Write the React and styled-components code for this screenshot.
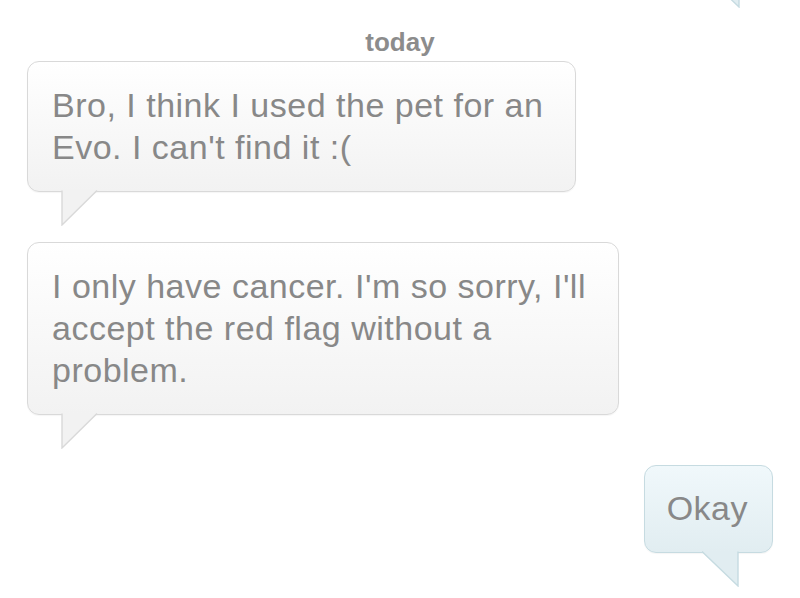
import React from "react";
import styled, { createGlobalStyle, css } from "styled-components";

const GlobalStyle = createGlobalStyle`
  html, body {
    margin: 0;
    padding: 0;
    background: #ffffff;
  }
  body {
    font-family: "Liberation Sans", Arial, Helvetica, sans-serif;
  }
`;

const palette = {
  in: {
    top: "#ffffff",
    bottom: "#f2f2f2",
    border: "#d9d9d9",
  },
  out: {
    top: "#f0f8fb",
    bottom: "#e1edf1",
    border: "#c6dbe1",
  },
};

const Screen = styled.div`
  width: 800px;
  height: 598px;
  overflow: hidden;
  display: flex;
  flex-direction: column;
  background: #ffffff;
`;

const Stub = styled.div`
  height: 8px;
  overflow: hidden;
  display: flex;
  justify-content: flex-end;
  padding-right: 60px;

  svg {
    margin-top: -28px;
  }
`;

const DayLabel = styled.div`
  margin-top: 19px;
  text-align: center;
  font-size: 26px;
  line-height: 30px;
  font-weight: bold;
  color: #8c8c8c;
`;

const Row = styled.div`
  display: flex;
  justify-content: ${(p) => (p.$out ? "flex-end" : "flex-start")};
  padding: 0 27px;
  margin-top: ${(p) => p.$gap}px;
`;

const Bubble = styled.div`
  position: relative;
  border-radius: 12px;
  border: 1px solid ${(p) => palette[p.$out ? "out" : "in"].border};
  background: linear-gradient(
    to bottom,
    ${(p) => palette[p.$out ? "out" : "in"].top},
    ${(p) => palette[p.$out ? "out" : "in"].bottom}
  );
  box-shadow: 0 1px 1px rgba(0, 0, 0, 0.04);
  color: #888888;
  font-size: 34px;
  line-height: 42px;
  letter-spacing: 0.5px;
  white-space: nowrap;
  ${(p) =>
    p.$out
      ? css`
          padding: 21px 24px 23px 22px;
        `
      : css`
          padding: 22px 32px 23px 24px;
        `}
`;

const TailSpot = styled.div`
  position: absolute;
  top: calc(100% - 1px);
  ${(p) => (p.$out ? "right: 33px;" : "left: 33px;")}
  width: 37px;
  height: 36px;
  line-height: 0;
`;

const Tail = ({ out }) => {
  const c = palette[out ? "out" : "in"];
  const fill = out ? "0,0 36,0 36,35" : "1,0 1,35 36,0";
  const edge = out ? "0,0.5 36,35 36,0.5" : "36,0.5 1,35 1,0.5";
  return (
    <svg width="37" height="36" viewBox="0 0 37 36">
      <polygon points={fill} fill={c.bottom} />
      <polyline points={edge} fill="none" stroke={c.border} strokeWidth="1.4" />
    </svg>
  );
};

const Message = ({ out, gap, lines }) => (
  <Row $out={out} $gap={gap}>
    <Bubble $out={out}>
      {lines.map((l, i) => (
        <React.Fragment key={i}>
          {i > 0 && <br />}
          {l}
        </React.Fragment>
      ))}
      <TailSpot $out={out}>
        <Tail out={out} />
      </TailSpot>
    </Bubble>
  </Row>
);

export default function App() {
  return (
    <>
      <GlobalStyle />
      <Screen>
        <Stub>
          <Tail out />
        </Stub>
        <DayLabel>today</DayLabel>
        <Message
          gap={4}
          lines={["Bro, I think I used the pet for an", "Evo. I can't find it :("]}
        />
        <Message
          gap={50}
          lines={[
            "I only have cancer. I'm so sorry, I'll",
            "accept the red flag without a",
            "problem.",
          ]}
        />
        <Message out gap={50} lines={["Okay"]} />
      </Screen>
    </>
  );
}
